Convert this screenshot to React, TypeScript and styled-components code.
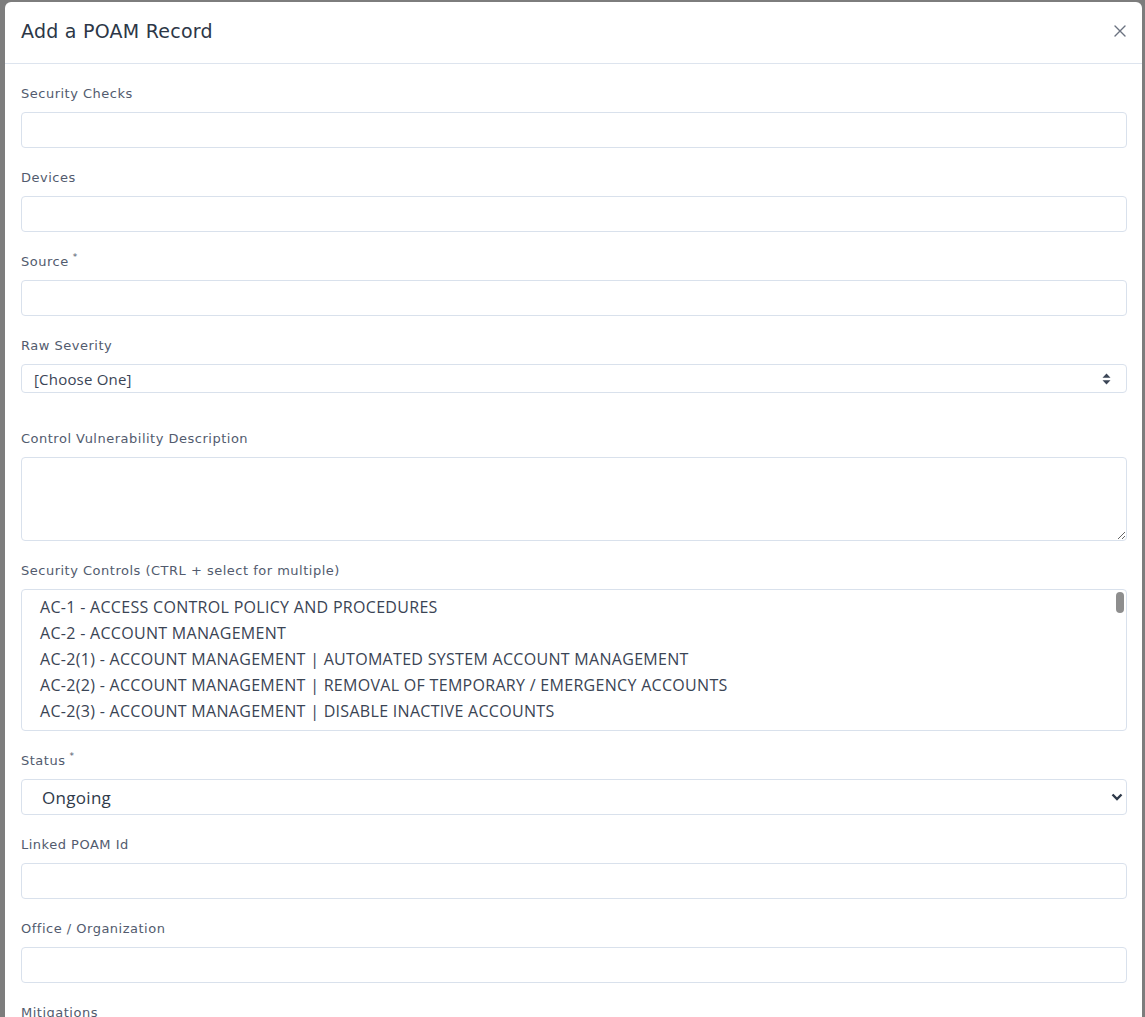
import React from 'react';
import styled, { createGlobalStyle } from 'styled-components';

const GlobalStyle = createGlobalStyle`
  html, body {
    margin: 0;
    padding: 0;
    background: #7d7d7d;
    overflow: hidden;
  }
  body {
    font-family: 'Open Sans', 'Liberation Sans', sans-serif;
  }
`;

const controls = [
  'AC-1 - ACCESS CONTROL POLICY AND PROCEDURES',
  'AC-2 - ACCOUNT MANAGEMENT',
  'AC-2(1) - ACCOUNT MANAGEMENT | AUTOMATED SYSTEM ACCOUNT MANAGEMENT',
  'AC-2(2) - ACCOUNT MANAGEMENT | REMOVAL OF TEMPORARY / EMERGENCY ACCOUNTS',
  'AC-2(3) - ACCOUNT MANAGEMENT | DISABLE INACTIVE ACCOUNTS',
  'AC-2(4) - ACCOUNT MANAGEMENT | AUTOMATED AUDIT ACTIONS',
];

const Field: React.FC<{ label: string; required?: boolean; children: React.ReactNode; after?: number }> = ({
  label,
  required,
  children,
  after,
}) => (
  <Group $after={after}>
    <Label>
      {label}
      {required && <Star>*</Star>}
    </Label>
    {children}
  </Group>
);

const App: React.FC = () => {
  return (
    <>
      <GlobalStyle />
      <Backdrop>
        <Modal>
          <Header>
            <Title>Add a POAM Record</Title>
            <Close aria-label="Close">
              <svg width="12" height="12" viewBox="0 0 12 12">
                <path d="M1 1 L11 11 M11 1 L1 11" stroke="#6b7280" strokeWidth="1.4" strokeLinecap="round" />
              </svg>
            </Close>
          </Header>
          <Body>
            <Field label="Security Checks">
              <Input />
            </Field>
            <Field label="Devices">
              <Input />
            </Field>
            <Field label="Source" required>
              <Input />
            </Field>
            <Field label="Raw Severity" after={35}>
              <SelectWrap>
                <SmallSelect defaultValue="">
                  <option value="">[Choose One]</option>
                </SmallSelect>
                <SelectIcon $right={16}>
                  <svg width="9" height="12" viewBox="0 0 9 12">
                    <path d="M4.5 0.5 L8.5 4.8 L0.5 4.8 Z M4.5 11.5 L8.5 7.2 L0.5 7.2 Z" fill="#3b4556" />
                  </svg>
                </SelectIcon>
              </SelectWrap>
            </Field>
            <Field label="Control Vulnerability Description">
              <TextArea />
            </Field>
            <Field label="Security Controls (CTRL + select for multiple)">
              <ListBox>
                {controls.map((c) => (
                  <ListOption key={c}>{c}</ListOption>
                ))}
                <Thumb />
              </ListBox>
            </Field>
            <Field label="Status" required>
              <SelectWrap>
                <BigSelect defaultValue="Ongoing">
                  <option>Ongoing</option>
                </BigSelect>
                <SelectIcon $right={4}>
                  <svg width="12" height="9" viewBox="0 0 12 9">
                    <path d="M1.5 2 L6 6.5 L10.5 2" stroke="#2f3a4a" strokeWidth="2.4" fill="none" />
                  </svg>
                </SelectIcon>
              </SelectWrap>
            </Field>
            <Field label="Linked POAM Id">
              <Input />
            </Field>
            <Field label="Office / Organization">
              <Input />
            </Field>
            <Field label="Mitigations">
              <Input />
            </Field>
          </Body>
        </Modal>
      </Backdrop>
    </>
  );
};

const Backdrop = styled.div`
  width: 100%;
  height: 1017px;
  overflow: hidden;
  padding: 2px 3px 0 5px;
  box-sizing: border-box;
  background: #7d7d7d;
`;

const Modal = styled.div`
  background: #ffffff;
  border-radius: 6px 6px 0 0;
  min-height: 1100px;
`;

const Header = styled.div`
  height: 61px;
  display: flex;
  align-items: center;
  justify-content: space-between;
  padding: 0 16px;
  border-bottom: 1px solid #dde4ee;
`;

const Title = styled.h5`
  margin: 0 0 3px;
  font-family: 'DejaVu Sans', 'Open Sans', sans-serif;
  font-size: 19px;
  font-weight: 400;
  color: #2c3747;
  letter-spacing: 0.25px;
`;

const Close = styled.button`
  border: none;
  background: transparent;
  padding: 0;
  margin-top: -4px;
  cursor: pointer;
  display: flex;
`;

const Body = styled.div`
  padding: 19px 15px 0 16px;
`;

const Group = styled.div<{ $after?: number }>`
  margin-bottom: ${(p) => p.$after ?? 19}px;
`;

const Label = styled.div`
  font-family: 'DejaVu Sans', 'Open Sans', sans-serif;
  font-size: 13px;
  line-height: 20px;
  height: 20px;
  padding-top: 1px;
  color: #525b6e;
  letter-spacing: 0.5px;
  margin-bottom: 8px;
`;

const Star = styled.sup`
  font-size: 9px;
  margin-left: 4px;
  vertical-align: 6px;
  line-height: 0;
`;

const fieldBorder = '#d9e1ec';

const Input = styled.input`
  display: block;
  width: 100%;
  box-sizing: border-box;
  height: 36px;
  border: 1px solid ${fieldBorder};
  border-radius: 4px;
  background: #fff;
  outline: none;
  font-family: inherit;
`;

const SelectWrap = styled.div`
  position: relative;
`;

const SmallSelect = styled.select`
  display: block;
  width: 100%;
  box-sizing: border-box;
  height: 29px;
  appearance: none;
  border: 1px solid ${fieldBorder};
  border-radius: 4px;
  background: #fff;
  padding: 0 12px;
  font-family: inherit;
  font-size: 15px;
  color: #3b4556;
  letter-spacing: 0.2px;
  outline: none;
`;

const BigSelect = styled.select`
  display: block;
  width: 100%;
  box-sizing: border-box;
  height: 36px;
  appearance: none;
  border: 1px solid ${fieldBorder};
  border-radius: 4px;
  background: #fff;
  padding: 0 20px;
  font-family: inherit;
  font-size: 17px;
  color: #2f3a4a;
  letter-spacing: 0.3px;
  outline: none;
`;

const SelectIcon = styled.span<{ $right: number }>`
  position: absolute;
  top: 50%;
  right: ${(p) => p.$right}px;
  transform: translateY(-50%);
  display: flex;
  pointer-events: none;
`;

const TextArea = styled.textarea`
  display: block;
  width: 100%;
  box-sizing: border-box;
  height: 84px;
  border: 1px solid ${fieldBorder};
  border-radius: 4px;
  resize: vertical;
  outline: none;
  font-family: inherit;
`;

const ListBox = styled.div`
  position: relative;
  height: 142px;
  box-sizing: border-box;
  border: 1px solid ${fieldBorder};
  border-radius: 4px;
  padding: 4px 0 0 18px;
  overflow: hidden;
`;

const ListOption = styled.div`
  font-size: 16px;
  line-height: 26px;
  color: #3a4454;
  letter-spacing: 0.3px;
  white-space: nowrap;
`;

const Thumb = styled.div`
  position: absolute;
  top: 2px;
  right: 2px;
  width: 8px;
  height: 21px;
  border-radius: 4px;
  background: #8e8e8e;
`;

export default App;
